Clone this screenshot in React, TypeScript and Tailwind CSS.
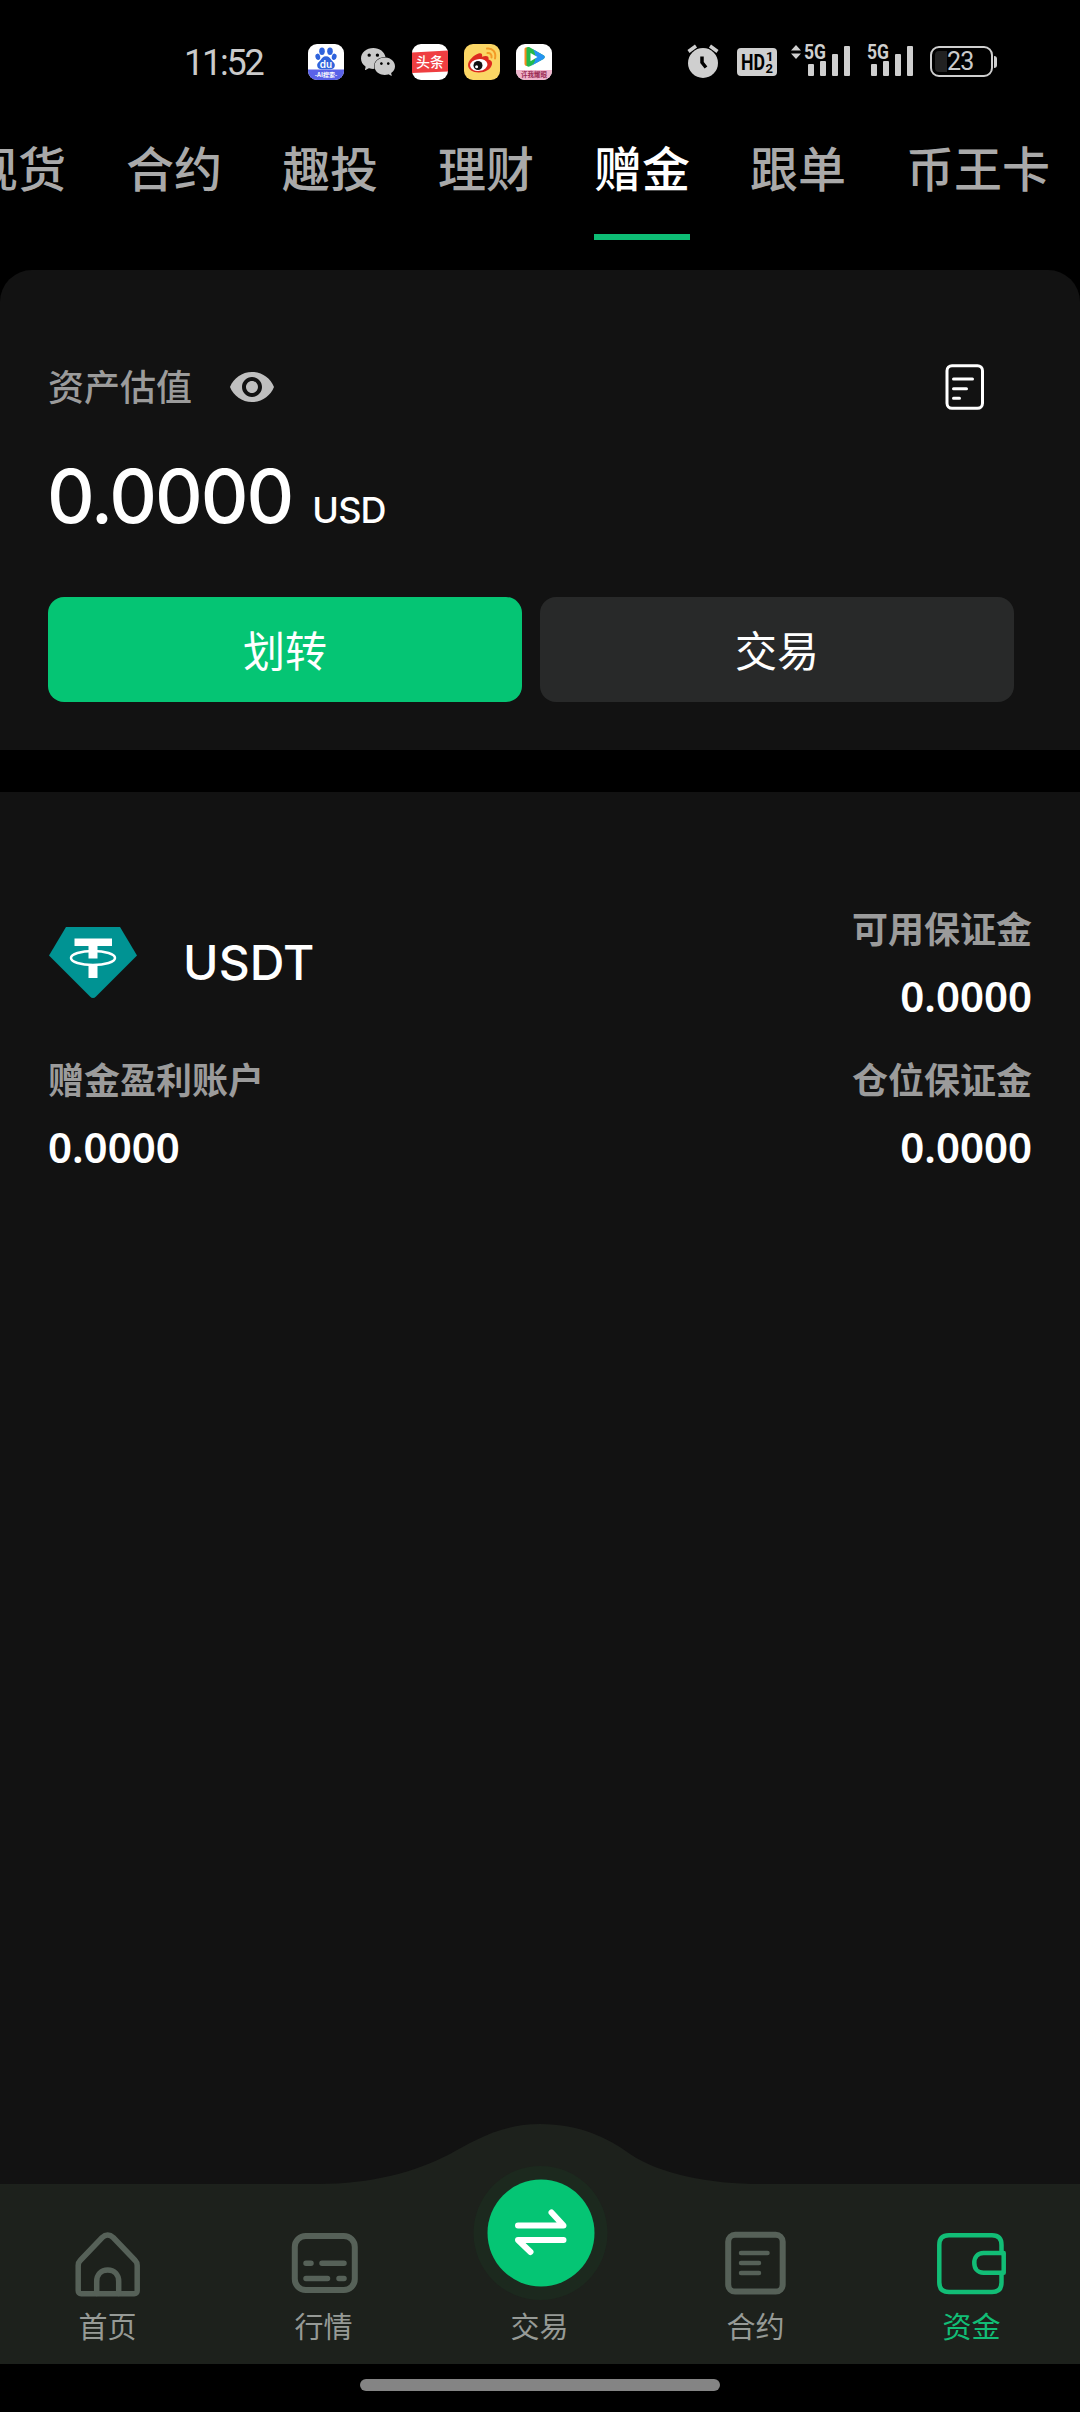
import { MdVisibility } from 'react-icons/md';
import { SiWechat } from 'react-icons/si';

const tabs = ['现货', '合约', '趣投', '理财', '赠金', '跟单', '币王卡'];

function BaiduIcon() {
  return (
    <svg className="w-9 h-9" viewBox="0 0 36 36">
      <clipPath id="baidu-clip">
        <rect width="36" height="36" rx="9" />
      </clipPath>
      <g clipPath="url(#baidu-clip)">
        <rect width="36" height="36" fill="#fff" />
        <rect y="25.5" width="36" height="10.5" fill="#5a62e8" />
        <g fill="#2f63dc">
          <ellipse cx="14" cy="7.2" rx="2.8" ry="3.7" />
          <ellipse cx="22" cy="7.2" rx="2.8" ry="3.7" />
          <ellipse cx="9.8" cy="12.8" rx="2.4" ry="3.2" transform="rotate(-12 9.8 12.8)" />
          <ellipse cx="26.2" cy="12.8" rx="2.4" ry="3.2" transform="rotate(12 26.2 12.8)" />
          <path d="M18 12.3c3 0 4 2.2 5.6 4 2 2 3.6 3.2 3.2 5.8-.4 2.5-2.4 3.1-4.3 3.1h-9c-1.9 0-3.9-.6-4.3-3.1-.4-2.6 1.2-3.8 3.2-5.8 1.6-1.8 2.6-4 5.6-4z" />
        </g>
        <text x="18" y="23.5" textAnchor="middle" fontSize="10" fontWeight="600" fill="#fff" className="font-['Inter']">du</text>
        <text x="18" y="33" textAnchor="middle" fontSize="6" fontWeight="700" fill="#fff">-AI搜索-</text>
      </g>
    </svg>
  );
}

function ToutiaoIcon() {
  return (
    <svg className="w-9 h-9" viewBox="0 0 36 36">
      <rect width="36" height="36" rx="9" fill="#fff" />
      <path d="M0 8.5L36 6.5V27.5L0 29z" fill="#ef3e41" />
      <text x="18" y="23" textAnchor="middle" fontSize="14" fontWeight="500" fill="#fff">头条</text>
    </svg>
  );
}

function WeiboIcon() {
  return (
    <svg className="w-9 h-9" viewBox="0 0 36 36">
      <rect width="36" height="36" rx="9" fill="#fbd665" />
      <path d="M4 21c0-4.500 6-10 10.500-11.500 3-1 4.300.6 3.500 3.300 3.500-1.500 7.500-1.300 6.500 2.600 2.800.8 4 2.500 3.500 4.900C27 25.500 21 28.500 14.800 28.500 8.500 28.500 4 25.400 4 21z" fill="#dd2a20" />
      <ellipse cx="14.8" cy="21" rx="8.7" ry="5.9" fill="#fff" transform="rotate(-7 14.8 21)" />
      <circle cx="14" cy="21.5" r="4.5" fill="#111" />
      <circle cx="12.6" cy="22.8" r="1.5" fill="#fff" />
      <g fill="none" stroke="#f39a26" strokeWidth="2" strokeLinecap="round">
        <path d="M23 4.500c5.500-.8 9.500 4 8 10" />
        <path d="M23.500 9c2.800-.4 4.500 1.800 4 4.500" />
      </g>
    </svg>
  );
}

function VideoIcon() {
  return (
    <svg className="w-9 h-9" viewBox="0 0 36 36">
      <clipPath id="video-clip">
        <rect width="36" height="36" rx="9" />
      </clipPath>
      <g clipPath="url(#video-clip)">
        <rect width="36" height="36" fill="#fff" />
        <rect y="26" width="36" height="10" fill="#eeb5cc" />
        <path d="M8.500 5c0-1.500 2-2.300 3.500-1.500v18.300c-1.700.7-3.500-.2-3.500-2z" fill="#f88a1c" />
        <path d="M10.500 4c.8-1 2.200-1.200 3.500-.5l13.500 7.700c1.700 1 1.700 2.700 0 3.700L14 22.300c-1.600.8-2.900.2-3.500-.8z" fill="#23b94b" />
        <path d="M17 5.200l10.500 6c1.700 1 1.700 2.700 0 3.700L15 21.900c5-3.200 6-10 2-16.700z" fill="#2493f2" />
        <path d="M14.500 9l7 4-7 4.200z" fill="#fff" />
        <text x="18" y="33" textAnchor="middle" fontSize="6.5" fontWeight="700" fill="#9b2c55">许我耀眼</text>
      </g>
    </svg>
  );
}

function Signal({ arrows }: { arrows?: boolean }) {
  return (
    <svg className="w-[60px] h-8 overflow-visible" viewBox="0 0 60 32" fill="#cfcfcf">
      {arrows && <path d="M0 6.500L5 1l5 5.500zM0 9.500h10L5 15z" />}
      <text x="13" y="15" fontSize="21" fontWeight="700" textLength="22" lengthAdjust="spacingAndGlyphs" className="font-['Roboto']">5G</text>
      <rect x="17" y="20" width="6" height="12" rx="1" />
      <rect x="29" y="17" width="6" height="15" rx="1" />
      <rect x="41" y="10" width="6" height="22" rx="1" />
      <rect x="53" y="2" width="6" height="30" rx="1" />
    </svg>
  );
}

function StatusBar() {
  return (
    <div className="h-[120px] pt-[44px] flex items-start text-[#cacaca]">
      <span className="w-[122px] ml-[184px] mr-px h-9 leading-[38px] text-[36px] tracking-[-2.2px] font-['Roboto']">11:52</span>
      <div className="flex gap-4 ml-px">
        <BaiduIcon />
        <SiWechat className="w-[34px] h-9 mx-px" />
        <ToutiaoIcon />
        <WeiboIcon />
        <VideoIcon />
      </div>
      <svg className="w-8 h-9 ml-[135px]" viewBox="0 0 32 36" fill="none">
        <circle cx="16" cy="19" r="15" fill="#cfcfcf" />
        <path d="M1.500 7.500L9 2M30.500 7.500L23 2" stroke="#cfcfcf" strokeWidth="3.5" />
        <path d="M15 12.500V18.500L19 23.500" stroke="#000" strokeWidth="3.5" />
      </svg>
      <svg className="w-10 h-9 ml-[18px]" viewBox="0 0 40 36">
        <rect y="4" width="40" height="28" rx="4" fill="#cfcfcf" />
        <g className="font-['Roboto']" fontWeight="700" fill="#000">
          <text x="4" y="26" fontSize="22" textLength="24" lengthAdjust="spacingAndGlyphs">HD</text>
          <text x="29" y="17" fontSize="13">1</text>
          <text x="28.5" y="29" fontSize="13">2</text>
        </g>
      </svg>
      <div className="flex gap-[3px] ml-[14px]">
        <Signal arrows />
        <Signal />
      </div>
      <div className="flex items-center ml-4 mt-[2px]">
        <div className="w-[63px] h-[31px] rounded-[9px] border-2 border-[#cfcfcf] p-[3px] flex items-center">
          <div className="w-3 h-full rounded-l-[4px] bg-[#222]" />
          <span className="text-[25px] leading-none tracking-[-0.8px] font-['Roboto']">23</span>
        </div>
        <div className="w-[3px] h-3 ml-px bg-[#cfcfcf] rounded-r-sm" />
      </div>
    </div>
  );
}

function TabBar() {
  return (
    <div className="h-[150px] overflow-hidden">
      {/* Scrolled so the first tab runs off the left edge */}
      <div className="flex gap-[60px] -ml-[30px] w-max text-[48px] font-medium text-[#a9a9a9]">
        {tabs.map((t) => (
          <div key={t} className={t === '赠金' ? 'text-white' : ''}>
            <div className="h-[114px] leading-[92px]">{t}</div>
            {t === '赠金' && <div className="h-1.5 bg-[#0dbd75]" />}
          </div>
        ))}
      </div>
    </div>
  );
}

function Balance({ label, right }: { label: string; right?: boolean }) {
  return (
    <div className={right ? 'text-right' : ''}>
      <p className="text-[36px] leading-[60px] font-bold text-[#9b9b9b]">{label}</p>
      <p className="mt-3 text-[42px] leading-[54px] font-semibold text-white font-['Noto_Sans']">0.0000</p>
    </div>
  );
}

function NavItem({ label, active, children }: { label: string; active?: boolean; children?: React.ReactNode }) {
  return (
    <div className={`flex-1 flex flex-col items-center ${active ? 'text-[#12bd76]' : 'text-[#566158]'}`}>
      <div className="h-[180px] flex items-end">
        <svg className="w-20 h-20" viewBox="0 0 80 80" fill="none" stroke="currentColor" strokeLinecap="round" strokeLinejoin="round">
          {children}
        </svg>
      </div>
      <span className={`text-[29px] leading-[40px] mt-px mr-px ${active ? '' : 'text-[#969a96]'}`}>{label}</span>
    </div>
  );
}

function BottomNav() {
  return (
    <div className="h-[240px] relative">
      {/* Raised bump behind the centre button */}
      <svg className="absolute inset-0 w-full h-full" viewBox="0 0 1080 240">
        <path d="M0 60H318C372 60 415 48 450 30C472 18 500 0 540 0C580 0 608 14 630 30C660 50 708 60 762 60H1080V240H0z" fill="#1d211c" />
        <circle cx="540.5" cy="109" r="67" fill="#1c291e" />
        <circle cx="541" cy="109" r="53.5" fill="#05c574" />
        <path d="M518 101.500H563.500L551.500 88.500M563.500 116H518L530.500 128" fill="none" stroke="#fff" strokeWidth="6" strokeLinecap="round" strokeLinejoin="round" />
      </svg>
      <div className="relative flex">
        <NavItem label="首页">
          <g strokeWidth="5.5">
            <path d="M10.200 41.500C10.200 39.500 10.700 38 12.200 36.500L34.200 13.500C37.700 10.200 41.700 10.200 45.200 13.500L67.200 36.500C68.700 38 69.200 39.500 69.200 41.500V66.500C69.200 68.500 68 69.800 66.200 69.800H13.200C11.400 69.800 10.200 68.500 10.200 66.500z" />
            <path d="M28.700 69.500V57.500C28.700 50.500 33.200 46 39.700 46S50.700 50.500 50.700 57.500V69.500" />
          </g>
        </NavItem>
        <NavItem label="行情">
          <rect x="10.8" y="12" width="60" height="54" rx="11" strokeWidth="6" />
          <path d="M22 39.200H27M38 39.200H60M22 54.500H43.500M55 54.500H60" strokeWidth="5.5" />
        </NavItem>
        <NavItem label="交易" />
        <NavItem label="合约">
          <rect x="12.2" y="10.8" width="54.5" height="56.8" rx="7" strokeWidth="6" />
          <path d="M25 29H51.500M25 39H43M25 49H43" strokeWidth="4.5" />
        </NavItem>
        <NavItem label="资金" active>
          <g strokeWidth="4.5">
            <path d="M69.500 29V21C69.500 14.500 66 11.300 60 11.300H17C10.500 11.300 7.300 14.500 7.300 21V58.500C7.300 65 10.500 68 17 68H60C66 68 69.500 65 69.500 58.500V49" />
            <path d="M71.700 29H51.500C45.500 29 42.300 33.500 42.300 38.900S45.500 48.700 51.500 48.700H71.700z" />
          </g>
        </NavItem>
      </div>
    </div>
  );
}

export default function App() {
  return (
    <div className="w-[1080px] h-[2412px] bg-black flex flex-col overflow-hidden font-['Noto_Sans_CJK_SC',sans-serif]">
      <StatusBar />
      <TabBar />

      {/* Valuation card */}
      <section className="h-[480px] bg-[#121212] rounded-t-[32px] px-12 pt-[87px]">
        <div className="flex items-center h-[60px]">
          <span className="text-[36px] leading-[56px] mb-[4px] font-medium text-[#9b9b9b]">资产估值</span>
          <MdVisibility className="w-12 h-12 ml-9 text-[#bfbfbf]" />
          <svg className="w-10 h-[46px] ml-auto mr-[47px]" viewBox="0 0 40 46" fill="none" stroke="#fff" strokeWidth="3" strokeLinecap="round">
            <rect x="2" y="1.7" width="35.5" height="42.6" rx="5" />
            <path d="M8.500 15H27.500M8.500 24.700H21.500M8.500 34.200H14.500" />
          </svg>
        </div>
        <div className="flex items-baseline h-[100px] mt-[29px] text-white font-['Inter']">
          <span className="text-[74px] leading-[100px] font-medium tracking-[-2px] -ml-px">0.0000</span>
          <span className="text-[36px] ml-[20px] font-medium tracking-[-0.8px]">USD</span>
        </div>
        <div className="flex gap-[18px] mt-[51px]">
          <button className="w-[474px] h-[105px] pb-[2px] rounded-[16px] bg-[#05c574] text-white text-[42px]">划转</button>
          <button className="w-[474px] h-[105px] pb-[2px] rounded-[16px] bg-[#282929] text-white text-[42px]">交易</button>
        </div>
      </section>

      <section className="mt-[42px] flex-1 bg-[#121212] px-12 pt-[105px]">
        <div className="flex justify-between">
          <div className="flex items-center pt-[6px]">
            <svg className="w-[90px] h-[72px]" viewBox="0 0 90 72">
              <path d="M18 0H72L89 28.500L48 69.500Q45 72.500 42 69.500L1 28.500z" fill="#009393" />
              <path d="M26.500 11.500H64V19H49.500V25H40.500V19H26.500zM40.500 25H49.500V31.500H40.500zM40.500 38H49.500V51H40.500z" fill="#fff" />
              <ellipse cx="45" cy="31" rx="22" ry="7" fill="none" stroke="#fff" strokeWidth="2.5" />
            </svg>
            <span className="ml-[45px] text-[48px] text-white font-medium tracking-[0.1px] font-['Inter']">USDT</span>
          </div>
          <Balance label="可用保证金" right />
        </div>
        <div className="flex justify-between mt-[25px]">
          <Balance label="赠金盈利账户" />
          <Balance label="仓位保证金" right />
        </div>
      </section>

      <div className="bg-[#121212]">
        <BottomNav />
      </div>
      <div className="h-12 pt-[15px] flex justify-center">
        <div className="w-[360px] h-3 rounded-full bg-[#848484]" />
      </div>
    </div>
  );
}
